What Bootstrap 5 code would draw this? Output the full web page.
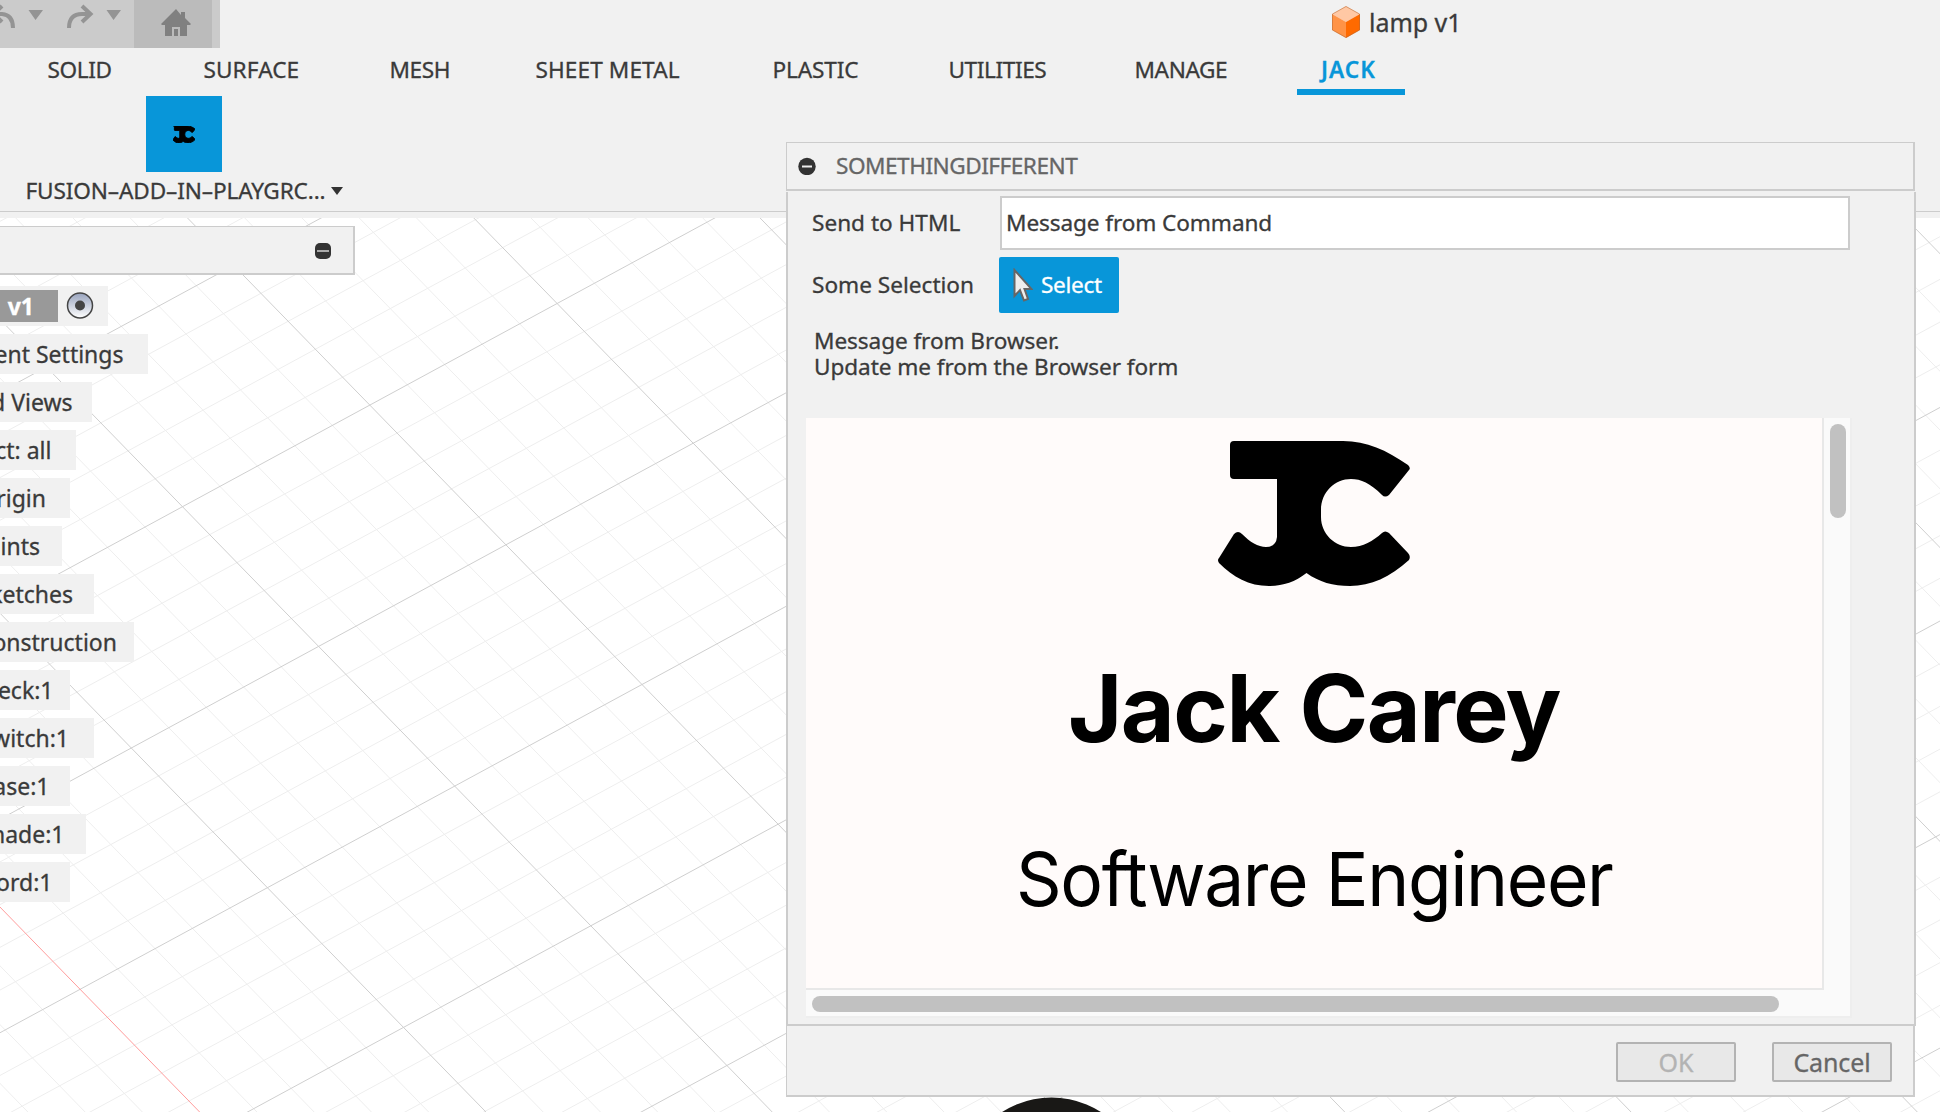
<!DOCTYPE html>
<html lang="en">
<head>
<meta charset="utf-8">
<title>lamp v1</title>
<link href="https://cdn.jsdelivr.net/npm/bootstrap@5.3.0/dist/css/bootstrap.min.css" rel="stylesheet">
<style>
body{width:1940px;height:1112px;overflow:hidden;background:#fff;color:#3a3a3a;font:22.6px/26px "Noto Sans",sans-serif;white-space:nowrap;-webkit-text-stroke:.3px}
.shell{height:1112px;overflow:hidden}
.ribbon{height:218px;background:#f1f1f1}
.ribbon-in{height:212px;border-bottom:1px solid #ccc}
.topbar{height:48px}
.quick{width:220px;background:#cbcbcb}
.quick-tools{width:134px}
.quick-home{width:78px;background:#bbb}
.doc-title{margin-left:1112px;font-size:25px}
.doc-title span{margin-left:9px;padding-top:9px;letter-spacing:-.05px}
.tabs{display:grid;grid-template-columns:156px 187px 145px 237px 176px 187px 183px 108px;padding-left:26px;height:48px}
.tabs .nav-link{color:#3a3a3a;padding:9px 0 0 21.5px;height:47px;letter-spacing:-.4px}
.tabs .nav-link:nth-child(2),.tabs .nav-link:nth-child(4){letter-spacing:.1px}
.tabs .nav-link:nth-child(3),.tabs .nav-link:nth-child(7){padding-left:20.5px}
.tabs .nav-link:nth-child(5){letter-spacing:-.15px}
.tabs .nav-link.active{color:#0896d9;font-weight:600;border-bottom:6px solid #0896d9;letter-spacing:1px;padding-left:24px}
.addin{width:76px;height:76px;margin-left:146px;background:#0896d9}
.panel-name{padding:6px 0 0 25.5px;letter-spacing:-.13px}
.canvas-grid{left:0;top:0;z-index:-1}
.tree-head{width:355px;height:49px;margin-top:8px;padding:1px 22px 0 0;background:#f1f1f1;border:solid #ccc;border-width:1px 2px 2px 0}
.tree{gap:8px;margin-top:11px}
.node{height:40px;background:#f1f1f1;font-size:23px}
.root-name{width:58px;height:32px;background:#999;color:#fff;padding-right:24px;font-weight:700}
.dialog-box{left:786px;top:142px;width:1130px;z-index:5}
.dlg-head{width:1129px;height:49px;background:#f1f1f1;border:solid #ccc;border-width:1px 2px 2px 1px;padding-left:11px;color:#666;gap:20px;letter-spacing:-.5px}
.dlg-body{height:834px;margin-top:1px;background:#f1f1f1;border:2px solid #ccc;border-top:0;padding:4px 0 0 18px}
.dlg-foot{width:1129px;height:71px;background:#f1f1f1;border:solid #ccc;border-width:0 2px 2px 1px;padding:16px 21px 0 0;gap:36px}
.lbl{width:194px;padding-left:6px}
.msg-in{width:850px;height:54px;border:2px solid #ccc;border-radius:0;background:#fff;padding:0 0 0 4px;letter-spacing:-.1px}
.pick-row{margin-top:7px}
.pick{width:120px;height:56px;margin-left:-1px;background:#0896d9;color:#fff;border-radius:2px;padding:0 0 0 14px;gap:8px;font:inherit;letter-spacing:-.3px}
.notes{margin:15px 0 0 8px;letter-spacing:-.08px}
.viewer{width:1046px;height:600px;margin-top:38px;background:#fafafa;border:solid #eee;border-width:0 2px 2px 0}
.page-view{width:1018px;height:572px;background:#fffbfa;border:solid #e8e8e8;border-width:0 2px 2px 0;font-family:Inter,sans-serif;color:#000;-webkit-text-stroke:0}
.mark-svg{margin-top:23px}
.name-line{font-size:93px;font-weight:700;line-height:112px;margin-top:65px;letter-spacing:-1.5px}
.role-line{font-size:74.6px;line-height:90px;margin-top:70px;letter-spacing:-1.45px;transform:scaleX(.955)}
.vthumb{width:16px;height:94px;border-radius:8px;background:#c1c1c1;margin:6px 0 0 6px}
.hthumb{width:967px;height:16px;border-radius:8px;background:#c1c1c1;margin:6px 0 0 6px}
.dbtn{width:120px;height:40px;padding:0;border:2px solid #b3b3b3;border-radius:2px;background:#e8e8e8;color:#666;font:25px/35px "Noto Sans",sans-serif;letter-spacing:-.1px}
.dbtn:disabled{color:#b3b3b3;border-color:#b3b3b3;background:#e8e8e8;opacity:1}
</style>
<script src="https://cdn.jsdelivr.net/npm/bootstrap@5.3.0/dist/js/bootstrap.bundle.min.js"></script>
</head>
<body>
<svg width="0" height="0" class="position-absolute"><defs>
<path id="jc" d="M4 0H125C149 0 168 9 190 24Q193 27 191 29L171 54Q167 57 164 54C152 42 143 38 133 38C117 38 103 51 103 69V76C103 93 117 106 133 106C145 106 155 100 164 92Q167 89 171 92L190 112Q193 115 191 119C172 136 153 145 132 145C115 145 101 141 88.500 132C77 141 65 145 51 145C31 145 15 136 1 122Q-1 119 1 117L16 93Q20 89 24 93C32 101 40 106 48 106Q58 106 59 96V38H16Q12 38 12 34V4Q12 0 16 0Z"/>
</defs></svg>
<svg class="canvas-grid position-absolute" id="grid" width="1940" height="1112"></svg>
<div class="shell d-flex flex-column">
 <header class="ribbon"><div class="ribbon-in">
  <div class="topbar d-flex">
   <div class="quick d-flex">
    <svg class="quick-tools" height="48" fill="none" stroke="#949494" stroke-width="4"><path d="M-8 14H2Q13 15 13 28M2 6L-6 14L2 22"/><path d="M69 28Q69 14 82 14H90M82 6L90.500 14L82 22"/><path d="M28.500 10h14.500L35.500 20zM106.500 10h14.500L113.500 20z" fill="#949494" stroke="none"/></svg>
    <div class="quick-home"><svg width="78" height="48" fill="#808080"><path d="M42 9L27 24l1 1h3v11h7v-9h8v9h7V25h3l1-1-6-6v-6h-4v3z"/><path d="M40 29h4v7h-4z"/></svg></div>
   </div>
   <div class="doc-title d-flex"><svg width="28" height="38"><path d="M14 6L28 14L14 22L0 14z" fill="#ffc8a4"/><path d="M0 14L14 22V38L0 30z" fill="#ff9346"/><path d="M28 14L14 22V38L28 30z" fill="#ff6a00"/><path d="M14 6.500L27.500 14V30L14 37.500L.5 30V14z" fill="none" stroke="#b86a35" stroke-opacity=".55"/></svg><span>lamp v1</span></div>
  </div>
  <nav class="tabs nav flex-nowrap">
   <a class="nav-link">SOLID</a><a class="nav-link">SURFACE</a><a class="nav-link">MESH</a><a class="nav-link">SHEET METAL</a><a class="nav-link">PLASTIC</a><a class="nav-link">UTILITIES</a><a class="nav-link">MANAGE</a><a class="nav-link active">JACK</a>
  </nav>
  <div class="addin d-flex align-items-center justify-content-center"><svg width="22" height="17" viewBox="0 0 192 146" preserveAspectRatio="none" stroke="#000" stroke-width="8"><use href="#jc"/></svg></div>
  <div class="panel-name"><span>FUSION–ADD–IN–PLAYGRC...</span><svg class="ms-1" width="14" height="16"><path d="M1 2h12L7 10z" fill="#333"/></svg></div>
 </div></header>
 <main>
  <div class="tree-head d-flex align-items-center justify-content-end"><svg width="16" height="16"><rect width="16" height="16" rx="5" fill="#333"/><path d="M2 8h12" stroke="#aaa" stroke-width="2"/></svg></div>
  <div class="tree d-flex flex-column" id="tree">
   <div class="node d-flex align-items-center" style="width:108px"><span class="root-name d-flex align-items-center justify-content-end">v1</span>
    <svg class="ms-2" width="28" height="28"><defs><linearGradient id="eye" x2="0" y2="1"><stop stop-color="#98a3bd"/><stop offset="1" stop-color="#fff"/></linearGradient></defs><circle cx="14" cy="13.500" r="12.500" fill="url(#eye)" stroke="#444" stroke-width="1.500"/><circle cx="14" cy="13.500" r="5" fill="#444"/></svg></div>
  </div>
 </main>
</div>
<section class="dialog-box position-absolute">
 <div class="dlg-head d-flex align-items-center"><svg width="18" height="18"><circle cx="9" cy="9.500" r="8.700" fill="#333"/><path d="M4 9.500h10" stroke="#eee" stroke-width="2"/></svg><span>SOMETHINGDIFFERENT</span></div>
 <div class="dlg-body">
  <div class="d-flex align-items-center"><label class="lbl">Send to HTML</label><div class="msg-in d-flex align-items-center">Message from Command</div></div>
  <div class="pick-row d-flex align-items-center"><span class="lbl">Some Selection</span><button class="pick btn d-flex align-items-center border-0"><svg width="20" height="34"><path d="M1.500 2V28L7 22L11 32.500L15 31L11.500 21H18.500z" fill="#eee" stroke="#666" stroke-width="2"/></svg><span>Select</span></button></div>
  <div class="notes"><div>Message from Browser.</div><div>Update me from the Browser form</div></div>
  <div class="viewer">
   <div class="d-flex"><div class="page-view d-flex flex-column align-items-center"><svg class="mark-svg" width="192" height="146"><use href="#jc"/></svg><div class="name-line">Jack Carey</div><div class="role-line">Software Engineer</div></div><div class="vthumb"></div></div>
   <div class="hthumb"></div>
  </div>
 </div>
 <div class="dlg-foot d-flex justify-content-end"><button class="dbtn btn" disabled>OK</button><button class="dbtn btn">Cancel</button></div>
</section>
<script>
const rows=[["ent Settings",148,24.5],["d Views",92,19.5],["ct: all",76,24.5],["rigin",70,24],["ints",62,22],["ketches",94,21],["onstruction",134,17],["eck:1",70,16.5],["witch:1",94,25],["ase:1",70,20.5],["hade:1",86,21.5],["ord:1",70,17.5]];
const tree=document.getElementById("tree");
for(const [t,w,p] of rows){const d=document.createElement("div");d.className="node d-flex align-items-center justify-content-end";d.style.width=w+"px";d.style.paddingRight=p+"px";d.innerHTML="<span>"+t+"</span>";tree.append(d)}
/* isometric ground grid: every fifth line is a major one */
const ox=557.1,oy=303.5,u=[-187.3,101.6],v=[136.1,139.7];
let minor="",major="",axis="";
const seg=(a,d,k)=>`M${a[0]-d[0]*k} ${a[1]-d[1]*k}L${a[0]+d[0]*k} ${a[1]+d[1]*k}`;
for(let i=-60;i<=60;i++){const s=i/5,pu=[ox+u[0]*s,oy+u[1]*s],pv=[ox+v[0]*s,oy+v[1]*s];
 const a=seg(pu,v,20),b=seg(pv,u,20);
 if(i===20)axis+=a;else if(i%5)minor+=a;else major+=a;
 if(i%5)minor+=b;else major+=b}
document.getElementById("grid").innerHTML=`<g fill="none"><path d="${minor}" stroke="#eee"/><path d="${major}" stroke="#cfcfcf"/><path d="${axis}" stroke="#ff9c9c"/></g><circle cx="1051.500" cy="1189" r="91.500" fill="#191816"/>`;
</script>
</body>
</html>
